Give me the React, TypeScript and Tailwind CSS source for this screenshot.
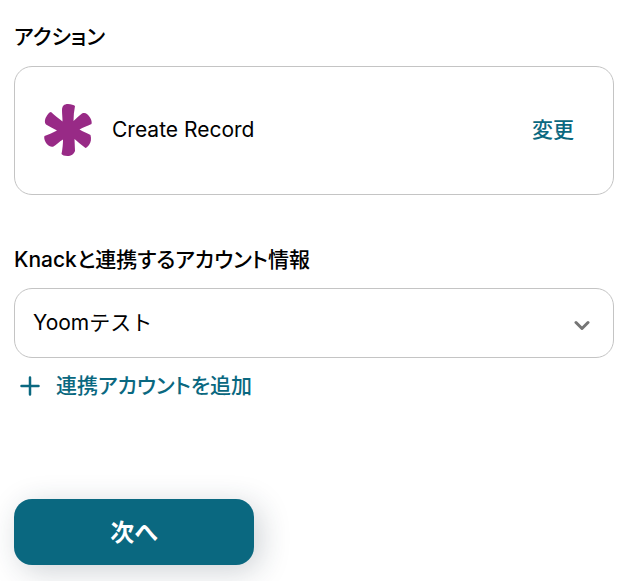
import type { ReactNode } from "react";

const KnackLogo = () => (
  <svg viewBox="0 0 48 52" className="h-13 w-12 shrink-0 fill-[#982a86]" aria-hidden="true">
    <path d="M18 6C18 2 20 0 24 0C27 0 30 1 31 2C30 7 29.500 12 29.500 17C32.500 14 35 12 38 9.500C41 8 44 10 46 13.500C47.500 16 48 18 47.500 20C43 22 39 23.500 35.500 25.500C39 27.500 42.500 29 46.500 31C47.500 35 47 38 45 41C43.500 43 42 44 41.500 44C37 40.500 33.500 37.500 30.500 35C30.500 39 31 43 31 47C30 50 27 52 23.500 52C20 52 18.500 51 17.500 50C18.500 45 19 40 19 35.500C15 38 12.500 40.500 9.500 42.500C6 43.500 3 41 1.500 38C0 35 0 33 0.500 32C5 30.500 9 28.500 13 26.500C9 24.500 5.500 22.500 2 20.500C0 18 1 14.500 3 11.500C4.500 9 6 8 7 8C10.500 11.500 15 14.500 18.500 17.500C18.500 13.500 18 10 18 6Z" />
  </svg>
);

const PlusIcon = () => (
  <svg
    viewBox="0 0 20 20"
    className="size-5 fill-none stroke-current stroke-[2.5]"
    strokeLinecap="round"
    aria-hidden="true"
  >
    <path d="M10 1.500v17M1.500 10h17" />
  </svg>
);

const ChevronIcon = () => (
  <svg
    viewBox="0 0 16 10"
    className="pointer-events-none absolute top-8 right-6 h-2.5 w-4 fill-none stroke-[#757575] stroke-3"
    strokeLinecap="round"
    strokeLinejoin="round"
    aria-hidden="true"
  >
    <path d="M2 2.500l6 6 6-6" />
  </svg>
);

const ActionCard = ({ children }: { children: ReactNode }) => (
  <div className="flex h-[129px] items-center rounded-[18px] border border-[#c4c4c4] pr-[39px] pb-0.5 pl-[29px]">
    <KnackLogo />
    <p className="ml-5">{children}</p>
    <button type="button" className="ml-auto font-medium text-[#0a6880]">
      変更
    </button>
  </div>
);

export default function App() {
  return (
    <main className="bg-white px-3.5 pt-[21px] pr-6 pb-4 font-['Inter','Noto_Sans_CJK_JP',sans-serif] text-[21px] leading-8 text-black">
      <h2 className="mb-[13px] font-medium [font-feature-settings:'palt']">アクション</h2>
      <ActionCard>Create Record</ActionCard>

      <label
        htmlFor="account"
        className="mt-[49px] mb-3 block font-medium [font-feature-settings:'palt']"
      >
        Knackと連携するアカウント情報
      </label>
      <div className="relative">
        <select
          id="account"
          className="block h-[70px] w-full appearance-none rounded-[18px] border border-[#c4c4c4] bg-white px-[18px]"
        >
          <option>Yoomテスト</option>
        </select>
        <ChevronIcon />
      </div>
      <button
        type="button"
        className="mt-3 ml-1.5 flex items-center gap-4 font-medium text-[#0a6880] [font-feature-settings:'palt']"
      >
        <PlusIcon />
        連携アカウントを追加
      </button>

      <button
        type="button"
        className="mt-[97px] block h-[66px] w-60 rounded-[18px] bg-[#0a6880] pt-0.5 text-2xl font-bold text-white shadow-[6px_6px_30px_rgba(30,50,70,0.22)] [font-feature-settings:'palt']"
      >
        次へ
      </button>
    </main>
  );
}
